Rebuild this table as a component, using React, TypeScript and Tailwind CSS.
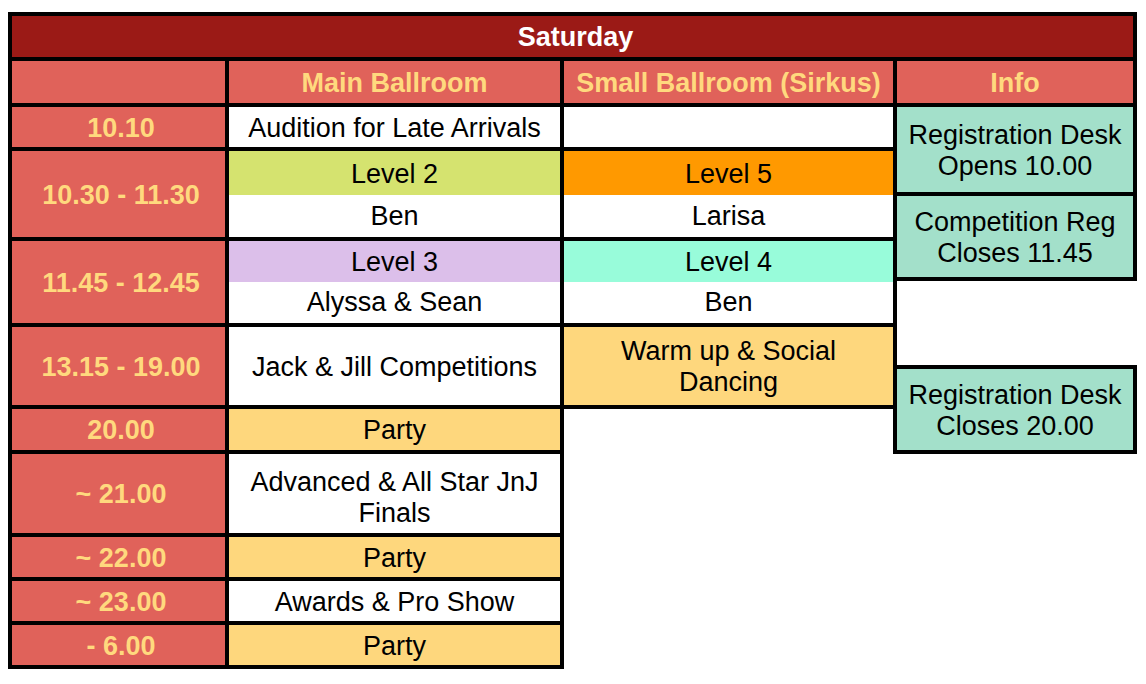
import React from "react";

const ring = "shadow-[0_0_0_4px_#000]";
const font = "font-['Liberation_Sans',Arial,sans-serif]";

function Time({ children }: { children: React.ReactNode }) {
  return (
    <div className={`col-start-1 ${ring} bg-[#E0625A] flex items-center justify-center pt-[2px] pl-[5px] font-bold text-[#FFD97E]`}>
      {children}
    </div>
  );
}

function Cell({ children, bg = "bg-white" }: { children?: React.ReactNode; bg?: string }) {
  return (
    <div className={`${ring} ${bg} flex items-center justify-center pt-[2px] text-center text-black`}>
      {children}
    </div>
  );
}

function Split({ topBg, top, bottom, topH }: { topBg: string; top: string; bottom: string; topH: string }) {
  return (
    <div className={`${ring} bg-white flex flex-col text-black`}>
      <div className={`${topBg} ${topH} flex items-center justify-center pt-[2px]`}>{top}</div>
      <div className="flex-1 flex items-center justify-center">{bottom}</div>
    </div>
  );
}

export default function App() {
  return (
    <div className={`w-[1146px] h-[684px] bg-white pl-[12px] pt-[16px] ${font} text-[27px] leading-[31px]`}>
      <div className="grid grid-cols-[213px_331px_329px_236px] gap-[4px]">
        <div className={`col-span-4 h-[41px] ${ring} bg-[#9B1A16] flex items-center justify-center pt-[2px] pl-[6px] font-bold text-white`}>
          Saturday
        </div>
        <div className={`h-[42px] ${ring} bg-[#E0625A]`} />
        <div className={`h-[42px] ${ring} bg-[#E0625A] flex items-center justify-center pt-[2px] font-bold text-[#FFD97E]`}>
          Main Ballroom
        </div>
        <div className={`h-[42px] ${ring} bg-[#E0625A] flex items-center justify-center pt-[2px] font-bold text-[#FFD97E]`}>
          Small Ballroom (Sirkus)
        </div>
        <div className={`h-[42px] ${ring} bg-[#E0625A] flex items-center justify-center pt-[2px] font-bold text-[#FFD97E]`}>
          Info
        </div>

        <div className="col-span-3 grid grid-cols-[213px_331px_329px] grid-rows-[40px_86px_82px_78px_41px_79px_40px_40px_40px] gap-[4px]">
          <Time>10.10</Time>
          <Cell>Audition for Late Arrivals</Cell>
          <Cell />

          <Time>10.30 - 11.30</Time>
          <Split topBg="bg-[#D5E36F]" topH="h-[44px]" top="Level 2" bottom="Ben" />
          <Split topBg="bg-[#FF9900]" topH="h-[44px]" top="Level 5" bottom="Larisa" />

          <Time>11.45 - 12.45</Time>
          <Split topBg="bg-[#DCBFEA]" topH="h-[41px]" top="Level 3" bottom="Alyssa & Sean" />
          <Split topBg="bg-[#98FCDA]" topH="h-[41px]" top="Level 4" bottom="Ben" />

          <Time>13.15 - 19.00</Time>
          <Cell>Jack &amp; Jill Competitions</Cell>
          <Cell bg="bg-[#FED77D]">
            <span>
              Warm up &amp; Social
              <br />
              Dancing
            </span>
          </Cell>

          <Time>20.00</Time>
          <Cell bg="bg-[#FED77D]">Party</Cell>

          <Time>~ 21.00</Time>
          <Cell>
            <span className="pt-[7px]">
              Advanced &amp; All Star JnJ
              <br />
              Finals
            </span>
          </Cell>

          <Time>~ 22.00</Time>
          <Cell bg="bg-[#FED77D]">Party</Cell>

          <Time>~ 23.00</Time>
          <Cell>Awards &amp; Pro Show</Cell>

          <Time>- 6.00</Time>
          <Cell bg="bg-[#FED77D]">Party</Cell>
        </div>

        <div className="flex flex-col">
          <div className={`h-[85px] ${ring} bg-[#A3E0CA] flex items-center justify-center pt-[2px] text-center`}>
            <span>
              Registration Desk
              <br />
              Opens 10.00
            </span>
          </div>
          <div className={`mt-[4px] h-[81px] ${ring} bg-[#A3E0CA] flex items-center justify-center pt-[2px] text-center`}>
            <span>
              Competition Reg
              <br />
              Closes 11.45
            </span>
          </div>
          <div className={`mt-[92px] h-[81px] ${ring} bg-[#A3E0CA] flex items-center justify-center pt-[2px] text-center`}>
            <span>
              Registration Desk
              <br />
              Closes 20.00
            </span>
          </div>
        </div>
      </div>
    </div>
  );
}
